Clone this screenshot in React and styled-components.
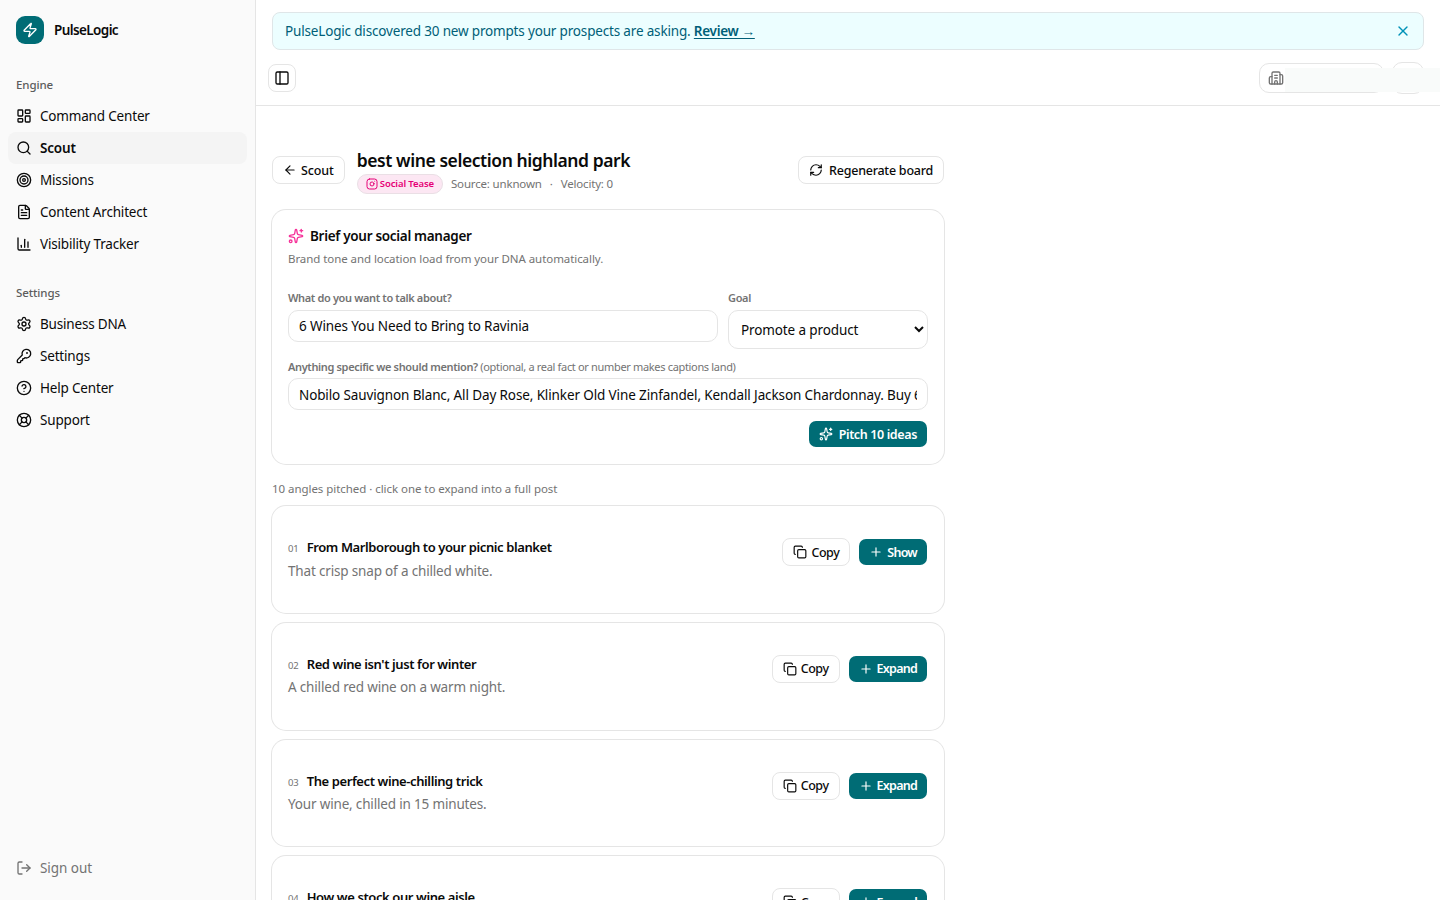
import React, { useState } from "react";
import styled, { createGlobalStyle, css } from "styled-components";
import {
  ArrowLeft,
  Building2,
  ChartColumn,
  CircleHelp,
  Copy,
  FileText,
  Instagram,
  KeyRound,
  LayoutDashboard,
  LifeBuoy,
  LogOut,
  PanelLeft,
  Plus,
  RefreshCw,
  Search,
  Settings,
  Sparkles,
  Target,
  X,
  Zap,
} from "lucide-react";

const GlobalStyle = createGlobalStyle`
  * {
    box-sizing: border-box;
  }
  body {
    margin: 0;
    overflow: hidden;
    background: #fff;
    color: #0a0a0a;
    font-family: "Segoe UI", "Noto Sans", "Open Sans", sans-serif;
    font-size: 13.5px;
    line-height: 20px;
  }
  button,
  input,
  select {
    font-family: inherit;
    color: inherit;
  }
  svg {
    flex-shrink: 0;
  }
`;

const Page = styled.div`
  display: flex;
  height: 100vh;
  overflow: hidden;
`;

const Sidebar = styled.aside`
  display: flex;
  flex-direction: column;
  width: 256px;
  flex-shrink: 0;
  background: #fafafa;
  border-right: 1px solid #e5e5e5;
`;

const Brand = styled.div`
  display: flex;
  align-items: center;
  gap: 10px;
  padding: 16px 16px 24px;
  font-size: 13.5px;
  font-weight: 600;
  letter-spacing: -0.6px;
`;

const BrandMark = styled.div`
  display: flex;
  align-items: center;
  justify-content: center;
  width: 28px;
  height: 28px;
  border-radius: 9px;
  background: #006c75;
  color: #fff;
`;

const NavGroup = styled.nav`
  padding: 0 8px;
  margin-bottom: 16px;
`;

const NavLabel = styled.div`
  display: flex;
  align-items: center;
  height: 32px;
  padding: 2px 8px 0;
  color: #5c5c5c;
  font-size: 11.5px;
  font-weight: 500;
  letter-spacing: -0.1px;
`;

const NavItem = styled.a`
  display: flex;
  align-items: center;
  gap: 8px;
  height: 32px;
  padding: 0 8px;
  border-radius: 8px;
  background: ${({ $active }) => ($active ? "#f4f4f4" : "transparent")};
  color: ${({ $muted }) => ($muted ? "#737373" : "#0a0a0a")};
  font-weight: ${({ $active }) => ($active ? 600 : 400)};
  letter-spacing: ${({ $muted }) => ($muted ? "-0.05px" : "-0.18px")};
  cursor: pointer;
`;

const SidebarFooter = styled.div`
  margin-top: auto;
  padding: 0 8px 16px;
`;

const Main = styled.main`
  flex: 1;
  min-width: 0;
`;

const Banner = styled.div`
  display: flex;
  align-items: center;
  justify-content: space-between;
  height: 38px;
  margin: 12px 16px 0;
  padding: 0 12px;
  border: 1px solid #dfe6e8;
  border-radius: 8px;
  background: #ecfeff;
  color: #005f78;
  letter-spacing: -0.17px;
`;

const ReviewLink = styled.a`
  font-weight: 600;
  letter-spacing: -0.3px;
  text-decoration: underline;
  text-underline-offset: 2px;
`;

const DismissButton = styled.button`
  display: flex;
  padding: 0;
  border: none;
  background: none;
  color: #0092b8;
  cursor: pointer;
`;

const TopBar = styled.header`
  position: relative;
  display: flex;
  align-items: center;
  justify-content: space-between;
  height: 56px;
  padding: 0 16px 0 12px;
  border-bottom: 1px solid #e5e5e5;
`;

const IconButton = styled.button`
  display: flex;
  align-items: center;
  justify-content: center;
  width: 28px;
  height: 28px;
  padding: 0;
  border: 1px solid #e5e5e5;
  border-radius: 8px;
  background: #fff;
`;

const Account = styled.div`
  display: flex;
  align-items: center;
  gap: 8px;
`;

const WorkspacePicker = styled.div`
  display: flex;
  align-items: center;
  width: 125px;
  height: 30px;
  padding: 0 8px;
  border: 1px solid #e5e5e5;
  border-radius: 10px;
  color: #737373;
`;

const Avatar = styled.div`
  width: 32px;
  height: 32px;
  border: 1px solid #e5e5e5;
  border-radius: 10px;
`;

/* Hides the workspace name and the avatar */
const AccountMask = styled.div`
  position: absolute;
  top: 18px;
  right: 0;
  width: 155px;
  height: 24px;
  background: #f9fbfa;
`;

const Content = styled.section`
  width: 672px;
  margin: 48px 0 0 16px;
`;

const PageHeader = styled.div`
  display: flex;
  align-items: center;
  gap: 12px;
  height: 32px;
`;

const HeaderText = styled.div`
  flex: 1;
  height: 48px;
`;

const Title = styled.h1`
  margin: 0;
  font-size: 17.5px;
  font-weight: 600;
  line-height: 28px;
  letter-spacing: -0.43px;
`;

const Meta = styled.div`
  display: flex;
  align-items: center;
  gap: 8px;
  color: #737373;
  font-size: 11.5px;
  line-height: 20px;
  letter-spacing: -0.17px;
`;

const Badge = styled.span`
  display: flex;
  align-items: center;
  gap: 2px;
  height: 20px;
  padding: 0 8px;
  border: 1px solid #eadfe5;
  border-radius: 10px;
  background: #fce7f3;
  color: #e60076;
  font-size: 9.5px;
  font-weight: 600;
  letter-spacing: -0.1px;
`;

const Button = styled.button`
  display: inline-flex;
  align-items: center;
  gap: ${({ $gap }) => $gap || 4}px;
  height: 28px;
  padding: 0 10px;
  border: 1px solid #e5e5e5;
  border-radius: 8px;
  background: #fff;
  background-clip: padding-box;
  font-size: 12.5px;
  font-weight: 500;
  letter-spacing: ${({ $tracking }) => $tracking || -0.3}px;
  white-space: nowrap;
  cursor: pointer;

  ${({ $primary }) =>
    $primary &&
    css`
      border-color: transparent;
      background-color: #006c75;
      color: #fff;
      font-weight: 600;
    `}
`;

const Card = styled.div`
  border-radius: 14px;
  background: #fff;
  box-shadow: 0 0 0 1px #e5e5e5;
`;

const BriefCard = styled(Card)`
  height: 254px;
  margin-top: 24px;
  padding: 16px;
`;

const BriefTitle = styled.div`
  display: flex;
  align-items: center;
  gap: 6px;
  font-weight: 600;
  letter-spacing: -0.3px;

  svg {
    color: #f6339a;
  }
`;

const BriefHint = styled.div`
  margin-top: 4px;
  color: #737373;
  font-size: 11.5px;
  line-height: 18px;
  letter-spacing: -0.07px;
`;

const FieldRow = styled.div`
  display: grid;
  grid-template-columns: 430px 200px;
  gap: 10px;
  align-items: start;
  margin-top: 22px;
`;

const Field = styled.label`
  display: block;
  color: #737373;
  font-size: 11px;
  font-weight: 600;
  line-height: 16px;
  letter-spacing: -0.36px;
`;

const Optional = styled.span`
  font-weight: 400;
  letter-spacing: -0.33px;
`;

const controlStyle = css`
  display: block;
  width: 100%;
  margin-top: 4px;
  border: 1px solid #e5e5e5;
  border-radius: 10px;
  background: #fff;
  color: #0a0a0a;
  font-size: 13.5px;
  font-weight: 400;
  letter-spacing: -0.12px;
  outline: none;
`;

const TextInput = styled.input`
  ${controlStyle}
  height: 32px;
  padding: 0 10px;
`;

const Select = styled.select`
  ${controlStyle}
  height: 39px;
  padding: 1px 0 0 8px;
`;

const DetailField = styled(Field)`
  margin-top: 10px;

  input {
    margin-top: 3px;
    padding-top: 2px;
  }
`;

const BriefActions = styled.div`
  display: flex;
  justify-content: flex-end;
  margin-top: 10px;
`;

const Summary = styled.div`
  margin: 16px 0 8px;
  color: #737373;
  font-size: 11.5px;
  line-height: 18px;
  letter-spacing: -0.05px;
`;

const IdeaList = styled.div`
  display: flex;
  flex-direction: column;
  gap: 10px;
`;

const IdeaCard = styled(Card)`
  display: flex;
  align-items: flex-start;
  justify-content: space-between;
  height: 106.75px;
  padding: 32px 16px;
`;

const IdeaHeading = styled.div`
  display: flex;
  align-items: baseline;
  gap: 8px;
  height: 20px;
  line-height: 18px;
`;

const IdeaNumber = styled.span`
  color: #737373;
  font-size: 9.5px;
  letter-spacing: -0.1px;
`;

const IdeaTitle = styled.span`
  font-size: 13px;
  font-weight: 600;
  letter-spacing: -0.4px;
`;

const IdeaHook = styled.div`
  margin-top: 1.6px;
  color: #737373;
  letter-spacing: -0.17px;
  line-height: 22.75px;
`;

const IdeaActions = styled.div`
  display: flex;
  gap: 8px;
`;

const engineLinks = [
  { label: "Command Center", icon: LayoutDashboard },
  { label: "Scout", icon: Search, active: true },
  { label: "Missions", icon: Target },
  { label: "Content Architect", icon: FileText },
  { label: "Visibility Tracker", icon: ChartColumn },
];

const settingsLinks = [
  { label: "Business DNA", icon: Settings },
  { label: "Settings", icon: KeyRound },
  { label: "Help Center", icon: CircleHelp },
  { label: "Support", icon: LifeBuoy },
];

const ideas = [
  {
    title: "From Marlborough to your picnic blanket",
    hook: "That crisp snap of a chilled white.",
    action: "Show",
  },
  {
    title: "Red wine isn't just for winter",
    hook: "A chilled red wine on a warm night.",
    action: "Expand",
  },
  {
    title: "The perfect wine-chilling trick",
    hook: "Your wine, chilled in 15 minutes.",
    action: "Expand",
  },
  {
    title: "How we stock our wine aisle",
    action: "Expand",
  },
];

const NavSection = ({ label, links }) => (
  <NavGroup>
    <NavLabel>{label}</NavLabel>
    {links.map(({ label, icon: Icon, active }) => (
      <NavItem key={label} $active={active}>
        <Icon size={16} />
        {label}
      </NavItem>
    ))}
  </NavGroup>
);

const App = () => {
  const [topic, setTopic] = useState("6 Wines You Need to Bring to Ravinia");
  const [details, setDetails] = useState(
    "Nobilo Sauvignon Blanc, All Day Rose, Klinker Old Vine Zinfandel, Kendall Jackson Chardonnay. Buy 6"
  );

  return (
    <Page>
      <GlobalStyle />
      <Sidebar>
        <Brand>
          <BrandMark>
            <Zap size={16} />
          </BrandMark>
          PulseLogic
        </Brand>
        <NavSection label="Engine" links={engineLinks} />
        <NavSection label="Settings" links={settingsLinks} />
        <SidebarFooter>
          <NavItem $muted>
            <LogOut size={16} />
            Sign out
          </NavItem>
        </SidebarFooter>
      </Sidebar>
      <Main>
        <Banner>
          <span>
            PulseLogic discovered 30 new prompts your prospects are asking.{" "}
            <ReviewLink>Review →</ReviewLink>
          </span>
          <DismissButton>
            <X size={16} />
          </DismissButton>
        </Banner>
        <TopBar>
          <IconButton>
            <PanelLeft size={16} />
          </IconButton>
          <Account>
            <WorkspacePicker>
              <Building2 size={16} />
            </WorkspacePicker>
            <Avatar />
          </Account>
          <AccountMask />
        </TopBar>
        <Content>
          <PageHeader>
            <Button $tracking={-0.1}>
              <ArrowLeft size={14} />
              Scout
            </Button>
            <HeaderText>
              <Title>best wine selection highland park</Title>
              <Meta>
                <Badge>
                  <Instagram size={12} />
                  Social Tease
                </Badge>
                <span>Source: unknown</span>
                <span>·</span>
                <span>Velocity: 0</span>
              </Meta>
            </HeaderText>
            <Button $gap={6} $tracking={-0.24}>
              <RefreshCw size={14} />
              Regenerate board
            </Button>
          </PageHeader>
          <BriefCard>
            <BriefTitle>
              <Sparkles size={16} />
              Brief your social manager
            </BriefTitle>
            <BriefHint>
              Brand tone and location load from your DNA automatically.
            </BriefHint>
            <FieldRow>
              <Field>
                What do you want to talk about?
                <TextInput
                  value={topic}
                  onChange={(e) => setTopic(e.target.value)}
                />
              </Field>
              <Field>
                Goal
                <Select>
                  <option>Promote a product</option>
                </Select>
              </Field>
            </FieldRow>
            <DetailField>
              Anything specific we should mention?{" "}
              <Optional>
                (optional, a real fact or number makes captions land)
              </Optional>
              <TextInput
                value={details}
                onChange={(e) => setDetails(e.target.value)}
              />
            </DetailField>
            <BriefActions>
              <Button $primary $gap={6} $tracking={-0.37}>
                <Sparkles size={14} />
                Pitch 10 ideas
              </Button>
            </BriefActions>
          </BriefCard>
          <Summary>
            10 angles pitched · click one to expand into a full post
          </Summary>
          <IdeaList>
            {ideas.map((idea, index) => (
              <IdeaCard key={idea.title}>
                <div>
                  <IdeaHeading>
                    <IdeaNumber>{String(index + 1).padStart(2, "0")}</IdeaNumber>
                    <IdeaTitle>{idea.title}</IdeaTitle>
                  </IdeaHeading>
                  {idea.hook && <IdeaHook>{idea.hook}</IdeaHook>}
                </div>
                <IdeaActions>
                  <Button $tracking={-0.45}>
                    <Copy size={14} />
                    Copy
                  </Button>
                  <Button $primary $tracking={-0.75}>
                    <Plus size={14} />
                    {idea.action}
                  </Button>
                </IdeaActions>
              </IdeaCard>
            ))}
          </IdeaList>
        </Content>
      </Main>
    </Page>
  );
};

export default App;
